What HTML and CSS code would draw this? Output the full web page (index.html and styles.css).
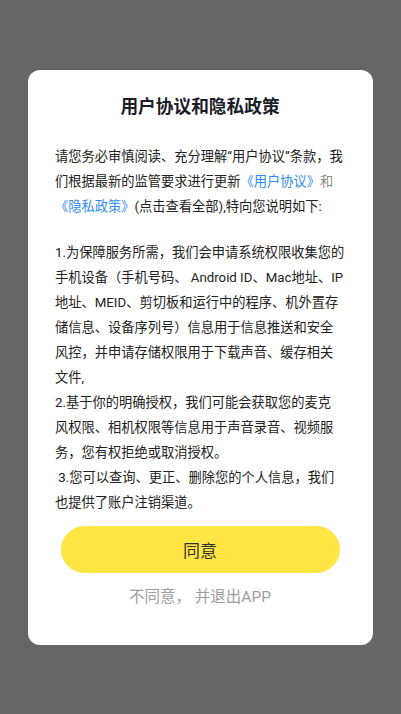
FILE: index.html
```html
<!DOCTYPE html>
<html lang="zh-CN">
<head>
<meta charset="utf-8">
<title>用户协议和隐私政策</title>
<link rel="stylesheet" href="styles.css">
</head>
<body>
<div class="overlay">
  <div class="dialog">
    <h1 class="title">用户协议和隐私政策</h1>
    <p class="text intro">请您务必审慎阅读、充分理解“用户协议”条款，我们根据最新的监管要求进行更新<a class="link">《用户协议》</a><span class="muted">和</span><a class="link">《隐私政策》</a>(点击查看全部),特向您说明如下:</p>
    <p class="text terms">1.为保障服务所需，我们会申请系统权限收集您的手机设备（手机号码、 Android ID、Mac地址、IP地址、MEID、剪切板和运行中的程序、机外置存储信息、设备序列号）信息用于信息推送和安全风控，并申请存储权限用于下载声音、缓存相关文件,<br>2.基于你的明确授权，我们可能会获取您的麦克<br>风权限、相机权限等信息用于声音录音、视频服务，您有权拒绝或取消授权。<br>&nbsp;3.您可以查询、更正、删除您的个人信息，我们也提供了账户注销渠道。</p>
    <button class="agree" type="button">同意</button>
    <div class="refuse">不同意， 并退出APP</div>
  </div>
</div>
</body>
</html>
```
FILE: styles.css
```css
html, body {
  margin: 0;
  padding: 0;
  background: #666666;
}
body {
  font-family: Roboto, "Noto Sans CJK SC", sans-serif;
  min-height: 714px;
}
.overlay {
  padding: 70px 28px 0 28px;
}
.dialog {
  width: 345px;
  box-sizing: border-box;
  background: #ffffff;
  border-radius: 12px;
  padding: 25px 28px 36px 27px;
  display: flex;
  flex-direction: column;
}
.title {
  margin: 0;
  font-size: 17.7px;
  line-height: 25px;
  font-weight: bold;
  color: #1c1c28;
  text-align: center;
}
.text {
  margin: 0;
  font-size: 13.25px;
  line-height: 25px;
  color: #222222;
}
.intro {
  margin-top: 24px;
}
.terms {
  margin-top: 21px;
}
.link {
  color: #2f8cf4;
}
.muted {
  color: #888888;
}
.agree {
  align-self: center;
  margin-top: 11px;
  width: 279px;
  height: 47px;
  border: none;
  border-radius: 24px;
  background: #ffe644;
  color: #333333;
  font-family: Roboto, "Noto Sans CJK SC", sans-serif;
  font-size: 17px;
  padding: 0;
}
.refuse {
  margin-top: 12px;
  text-align: center;
  font-size: 15.5px;
  line-height: 24px;
  color: #9e9e9e;
}
```
